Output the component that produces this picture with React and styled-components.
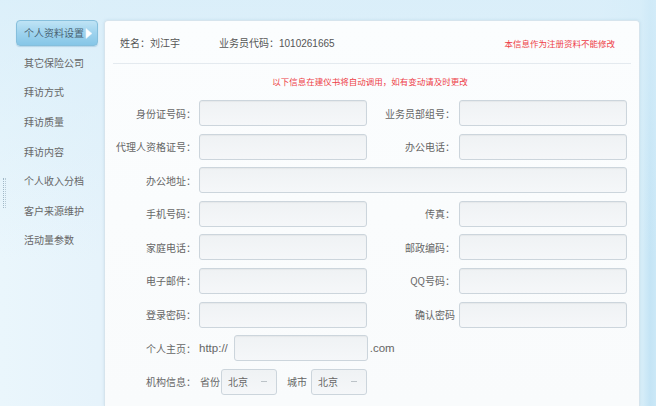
import React from "react";
import styled, { createGlobalStyle } from "styled-components";

const Global = createGlobalStyle`
  html, body { margin: 0; padding: 0; }
  body {
    width: 656px;
    height: 406px;
    overflow: hidden;
    font-family: "Noto Sans CJK SC", "Liberation Sans", sans-serif;
    background:
      linear-gradient(180deg, rgba(214, 237, 249, 0.7) 0px, rgba(255, 255, 255, 0) 260px),
      linear-gradient(90deg, #eaf6fc 0px, #e6f3fb 100px, #e3f2fb 600px, #d9eff9 641px, #c4e4f5 650px, #cbe8f7 656px);
  }
`;

const Page = styled.div`
  position: relative;
  display: flex;
  height: 406px;
  padding-top: 20px;
  box-sizing: border-box;
  overflow: hidden;
`;

const Handle = styled.div`
  position: absolute;
  left: 3px;
  top: 178px;
  width: 3px;
  height: 30px;
  border-left: 1px dotted #9fb7c6;
  border-right: 1px dotted #b7cad6;
  box-sizing: border-box;
`;

const Sidebar = styled.nav`
  width: 104px;
  flex: none;
  box-sizing: border-box;
  padding-left: 16px;
  padding-right: 6px;
  display: flex;
  flex-direction: column;
  gap: 3.65px;
`;

const MenuItem = styled.div`
  position: relative;
  height: 26px;
  line-height: 26px;
  padding-left: ${(p) => (p.$active ? "7px" : "8px")};
  font-size: 10px;
  color: ${(p) => (p.$active ? "#4a6474" : "#666")};
  border-radius: 4px;
  box-sizing: border-box;
  white-space: nowrap;
  ${(p) =>
    p.$active &&
    `
    background: linear-gradient(180deg, #bfe3f5 0%, #9ed3ee 50%, #86c6e7 100%);
    border: 1px solid #86bfdc;
    line-height: 24px;
    box-shadow: 0 1px 1px rgba(90, 150, 190, 0.3);
  `}
`;

const Arrow = styled.svg`
  position: absolute;
  right: 4px;
  top: 7px;
`;

const Panel = styled.section`
  width: 536px;
  height: 386px;
  flex: none;
  box-sizing: border-box;
  background: linear-gradient(180deg, #fbfdfe 0%, #f9fbfc 100%);
  border: 1px solid #d6e4ed;
  border-bottom: none;
  border-radius: 4px 4px 0 0;
  box-shadow: 0 0 3px rgba(150, 190, 215, 0.35);
`;

const Header = styled.div`
  height: 42px;
  margin: 0 8px;
  padding-left: 7px;
  padding-right: 16px;
  display: flex;
  align-items: center;
  border-bottom: 1px solid #e4eaef;
  font-size: 10px;
  color: #555;
`;

const HeaderField = styled.span`
  margin-right: ${(p) => p.$gap || "0px"};
  font-family: "Liberation Sans", "Noto Sans CJK SC", sans-serif;
`;

const RedNote = styled.span`
  margin-left: auto;
  color: #ee3d47;
  font-size: 8.5px;
  padding-top: 1px;
`;

const Notice = styled.div`
  height: 34px;
  line-height: 34px;
  text-align: center;
  color: #ee3d47;
  font-size: 8.5px;
  padding-right: 4px;
`;

const Form = styled.div`
  padding-top: 2px;
  display: grid;
  grid-template-columns: 94px 168px 92px 168px;
  grid-auto-rows: 26px;
  row-gap: 7.6px;
`;

const Label = styled.label`
  display: flex;
  align-items: center;
  justify-content: flex-end;
  padding-right: ${(p) => p.$pad || "3px"};
  font-size: 10px;
  color: #666;
  white-space: nowrap;
`;

const Input = styled.div`
  box-sizing: border-box;
  height: 26px;
  width: ${(p) => p.$w || "auto"};
  margin-left: ${(p) => p.$ml || "0"};
  border: 1px solid #ccd5dc;
  border-radius: 3px;
  background: linear-gradient(180deg, #eff2f4 0%, #f5f7f9 100%);
  box-shadow: inset 0 1px 1px rgba(0, 0, 0, 0.04);
  grid-column: ${(p) => p.$span || "auto"};
`;

const InlineRow = styled.div`
  grid-column: 2 / 5;
  display: flex;
  align-items: center;
  font-size: 10px;
  color: #666;
`;

const Affix = styled.span`
  font-family: "Liberation Sans", sans-serif;
  margin: ${(p) => p.$m || "0"};
  font-size: 11.5px;
`;

const SmallLabel = styled.span`
  margin: ${(p) => p.$m || "0"};
`;

const Select = styled.div`
  box-sizing: border-box;
  width: 56px;
  height: 26px;
  display: flex;
  align-items: center;
  justify-content: space-between;
  padding: 0 9px 0 6px;
  border: 1px solid #ccd5dc;
  border-radius: 3px;
  background: linear-gradient(180deg, #eff2f4 0%, #f5f7f9 100%);
  font-size: 10px;
  color: #666;
`;

const Dash = styled.span`
  width: 6px;
  height: 1px;
  background: #bcc3c8;
`;

const menu = ["个人资料设置", "其它保险公司", "拜访方式", "拜访质量", "拜访内容", "个人收入分档", "客户来源维护", "活动量参数"];

const pairs = [
  ["身份证号码：", "业务员部组号："],
  ["代理人资格证号：", "办公电话："],
];
const pairs2 = [
  ["手机号码：", "传真："],
  ["家庭电话：", "邮政编码："],
  ["电子邮件：", "QQ号码："],
  ["登录密码：", "确认密码"],
];

function PairRow({ left, right }) {
  return (
    <>
      <Label>{left}</Label>
      <Input />
      <Label $pad="4px">{right}</Label>
      <Input />
    </>
  );
}

export default function App() {
  return (
    <>
      <Global />
      <Page>
        <Handle />
        <Sidebar>
          {menu.map((m, i) => (
            <MenuItem key={m} $active={i === 0}>
              {m}
              {i === 0 && (
                <Arrow width="8" height="11" viewBox="0 0 8 11">
                  <path d="M1 0.5 L7 5.5 L1 10.5 Z" fill="#ffffff" stroke="#e6f4fb" strokeWidth="0.6" />
                </Arrow>
              )}
            </MenuItem>
          ))}
        </Sidebar>
        <Panel>
          <Header>
            <HeaderField $gap="39px">姓名：刘江宇</HeaderField>
            <HeaderField>业务员代码：1010261665</HeaderField>
            <RedNote>本信息作为注册资料不能修改</RedNote>
          </Header>
          <Notice>以下信息在建仪书将自动调用，如有变动请及时更改</Notice>
          <Form>
            {pairs.map(([l, r]) => (
              <PairRow key={l} left={l} right={r} />
            ))}
            <Label>办公地址：</Label>
            <Input $span="2 / 5" />
            {pairs2.map(([l, r]) => (
              <PairRow key={l} left={l} right={r} />
            ))}
            <Label>个人主页：</Label>
            <InlineRow>
              <Affix>http://</Affix>
              <Input $w="134px" $ml="6px" />
              <Affix $m="0 0 0 2px">.com</Affix>
            </InlineRow>
            <Label>机构信息：</Label>
            <InlineRow>
              <SmallLabel $m="0 1px 0 1px">省份</SmallLabel>
              <Select>
                <span>北京</span>
                <Dash />
              </Select>
              <SmallLabel $m="0 4px 0 10px">城市</SmallLabel>
              <Select>
                <span>北京</span>
                <Dash />
              </Select>
            </InlineRow>
          </Form>
        </Panel>
      </Page>
    </>
  );
}
